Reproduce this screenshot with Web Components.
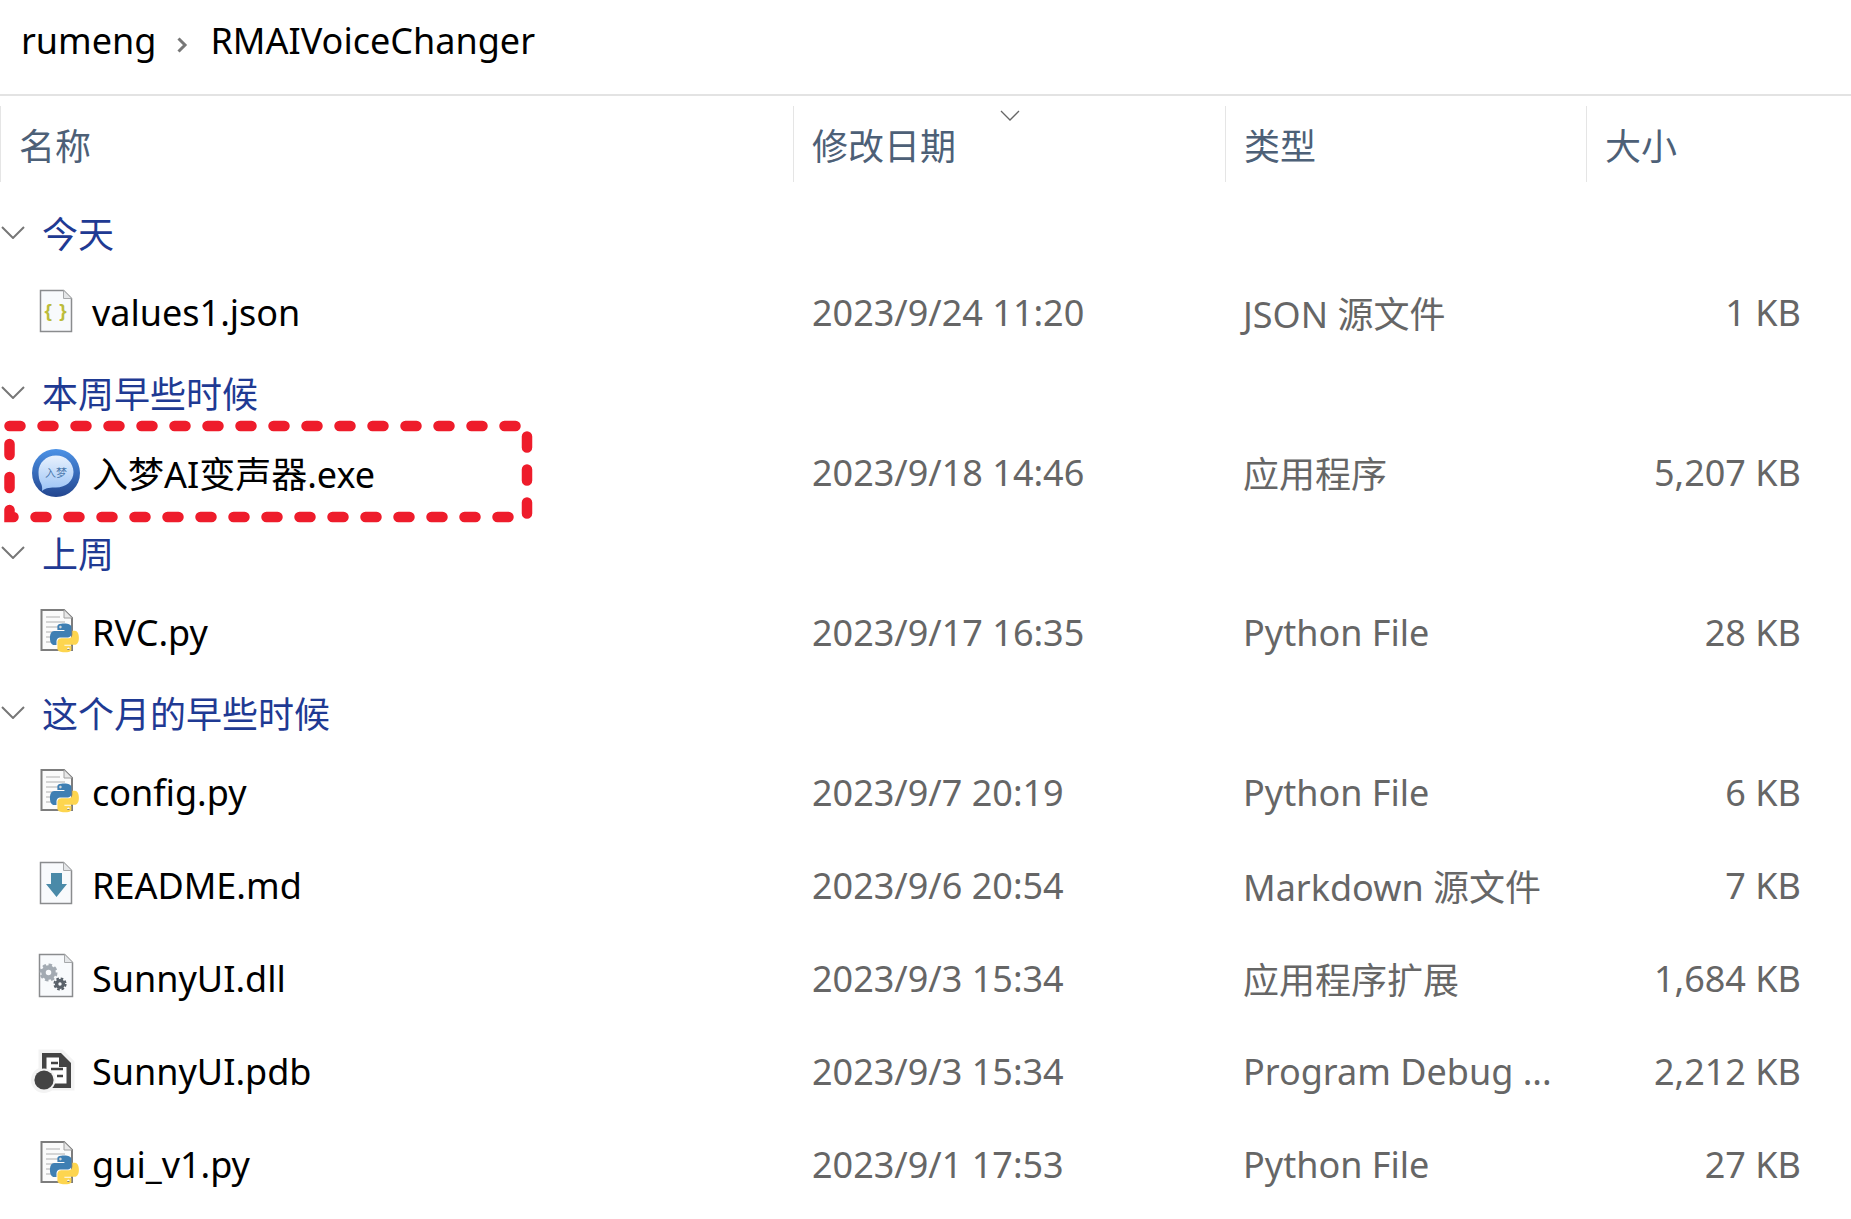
<!DOCTYPE html>
<html lang="zh">
<head>
<meta charset="utf-8">
<title>RMAIVoiceChanger</title>
<style>
  html, body { margin: 0; background: #fff; }
  body {
    font-family: "Noto Sans", "Noto Sans CJK SC", sans-serif;
    font-size: 36px;
    height: 1219px;
    overflow: hidden;
    --cols: 793px 432px 361px 239px;
  }
</style>
</head>
<body>
<explorer-window>
  <bread-crumb>
    <span>rumeng</span>
    <span>RMAIVoiceChanger</span>
  </bread-crumb>
  <column-header></column-header>

  <file-group label="今天">
    <file-row icon="json">values1.json<span slot="date">2023/9/24 11:20</span><span slot="type">JSON 源文件</span><span slot="size">1 KB</span></file-row>
  </file-group>
  <file-group label="本周早些时候">
    <file-row icon="exe">入梦AI变声器.exe<span slot="date">2023/9/18 14:46</span><span slot="type">应用程序</span><span slot="size">5,207 KB</span><dash-mark></dash-mark></file-row>
  </file-group>
  <file-group label="上周">
    <file-row icon="py">RVC.py<span slot="date">2023/9/17 16:35</span><span slot="type">Python File</span><span slot="size">28 KB</span></file-row>
  </file-group>
  <file-group label="这个月的早些时候">
    <file-row icon="py">config.py<span slot="date">2023/9/7 20:19</span><span slot="type">Python File</span><span slot="size">6 KB</span></file-row>
    <file-row icon="md">README.md<span slot="date">2023/9/6 20:54</span><span slot="type">Markdown 源文件</span><span slot="size">7 KB</span></file-row>
    <file-row icon="dll">SunnyUI.dll<span slot="date">2023/9/3 15:34</span><span slot="type">应用程序扩展</span><span slot="size">1,684 KB</span></file-row>
    <file-row icon="pdb">SunnyUI.pdb<span slot="date">2023/9/3 15:34</span><span slot="type">Program Debug ...</span><span slot="size">2,212 KB</span></file-row>
    <file-row icon="py">gui_v1.py<span slot="date">2023/9/1 17:53</span><span slot="type">Python File</span><span slot="size">27 KB</span></file-row>
  </file-group>
</explorer-window>

<script>
// python logo, split in two so each snake gets its own colour
const PY_BLUE = 'M14.25.18l.9.2.73.26.59.3.45.32.34.34.25.34.16.33.1.3.04.26.02.2-.01.13V8.5l-.05.63-.13.55-.21.46-.26.38-.3.31-.33.25-.35.19-.35.14-.33.1-.3.07-.26.04-.21.02H8.77l-.69.05-.59.14-.5.22-.41.27-.33.32-.27.35-.2.36-.15.37-.1.35-.07.32-.04.27-.02.21v3.06H3.17l-.21-.03-.28-.07-.32-.12-.35-.18-.36-.26-.36-.36-.35-.46-.32-.59-.28-.73-.21-.88-.14-1.05-.05-1.23.06-1.22.16-1.04.24-.87.32-.71.36-.57.4-.44.42-.33.42-.24.4-.16.36-.1.32-.05.24-.01h.16l.06.01h8.16v-.83H6.18l-.01-2.75-.02-.37.05-.34.11-.31.17-.28.25-.26.31-.23.38-.2.44-.18.51-.15.58-.12.64-.1.71-.06.77-.04.84-.02 1.27.05zm-6.3 1.98l-.23.33-.08.41.08.41.23.34.33.22.41.09.41-.09.33-.22.23-.34.08-.41-.08-.41-.23-.33-.33-.22-.41-.09-.41.09z';
const PY_YELLOW = 'M21.04 6.11l.28.06.32.12.35.18.36.27.36.35.35.47.32.59.28.73.21.88.14 1.04.05 1.23-.06 1.23-.16 1.04-.24.86-.32.71-.36.57-.4.45-.42.33-.42.24-.4.16-.36.09-.32.05-.24.02-.16-.01h-8.22v.82h5.84l.01 2.76.02.36-.05.34-.11.31-.17.29-.25.25-.31.24-.38.2-.44.17-.51.15-.58.13-.64.09-.71.07-.77.04-.84.01-1.27-.04-1.07-.14-.9-.2-.73-.25-.59-.3-.45-.33-.34-.34-.25-.34-.16-.33-.1-.3-.04-.25-.02-.2.01-.13v-5.34l.05-.64.13-.54.21-.46.26-.38.3-.32.33-.24.35-.2.35-.14.33-.1.3-.06.26-.04.21-.02.13-.01h5.84l.69-.05.59-.14.5-.21.41-.28.33-.32.27-.35.2-.36.15-.36.1-.35.07-.32.04-.28.02-.21V6.07h2.09l.14.01zm-6.47 14.25l-.23.33-.08.41.08.41.23.33.33.23.41.08.41-.08.33-.23.23-.33.08-.41-.08-.41-.23-.33-.33-.23-.41-.08-.41.08z';

const sheet = (x, y, w, h, fold) => `
  <path d="M${x} ${y}H${x + w - fold}L${x + w} ${y + fold}V${y + h}H${x}Z" fill="#f8fafc" stroke="#8a8c8e" stroke-width="1.5"/>
  <path d="M${x + w - fold} ${y}V${y + fold}H${x + w}" fill="#e4e6e8" stroke="#a6a8aa" stroke-width="1"/>`;

const ICONS = {
  json: sheet(8.5, 1.5, 31, 41, 8) + `
    <text x="24" y="28" text-anchor="middle" font-family="Liberation Sans, sans-serif" font-size="19" font-weight="700" fill="#bcbc3a" letter-spacing="1">{ }</text>`,
  py: `
    <path d="M9.5 1H32L40 9V41H9.5Z" fill="#fbfbfb" stroke="#7d7d7d" stroke-width="2"/>
    <path d="M32 1V9H40" fill="#e8e8e8" stroke="#a0a0a0" stroke-width="1"/>
    <path d="M14 8H28M14 13H33M14 18H33M14 23H21M14 28H19M14 33H20" stroke="#c9c9c9" stroke-width="1.6"/>
    <g transform="translate(18 14.5) scale(1.2)"><path d="${PY_BLUE}" fill="#3f7fb3"/><path d="${PY_YELLOW}" fill="#fdd54f"/></g>`,
  md: sheet(8.5, 0.5, 31, 41, 8) + `
    <path d="M19 11H30V22H35L24.5 35 14 22H19Z" fill="#4a8aa8"/>`,
  dll: sheet(7.5, -0.5, 33, 42, 8) + `
    <circle cx="16.5" cy="17.5" r="5" fill="none" stroke="#a3aab2" stroke-width="4.5"/>
    <circle cx="16.5" cy="17.5" r="7.8" fill="none" stroke="#a3aab2" stroke-width="2.4" stroke-dasharray="3.5 2.6"/>
    <circle cx="28" cy="29" r="3.4" fill="none" stroke="#59616a" stroke-width="3.4"/>
    <circle cx="28" cy="29" r="5.6" fill="none" stroke="#59616a" stroke-width="2" stroke-dasharray="2.6 1.8"/>`,
  pdb: `
    <circle cx="12" cy="32" r="13" fill="#f3f3f3"/>
    <path d="M8 3H30L41 14V41H8Z" fill="#f3f3f3" stroke="#f3f3f3" stroke-width="3"/>
    <path d="M10 5H29L39 15V40H10Z" fill="#444"/>
    <path d="M14.5 9.5H27V19H34.5V35.5H14.5Z" fill="#fff"/>
    <path d="M19 15H26M19 21H31M25 28H31" stroke="#444" stroke-width="2.6"/>
    <circle cx="12" cy="32" r="11.5" fill="#f3f3f3"/>
    <circle cx="12" cy="32" r="9.6" fill="#444"/>`,
  exe: `
    <defs>
      <linearGradient id="ring" x1="0" y1="0" x2="0" y2="1"><stop offset="0" stop-color="#4c92e6"/><stop offset="1" stop-color="#23468f"/></linearGradient>
      <linearGradient id="fill" x1="0" y1="0" x2="0" y2="1"><stop offset="0" stop-color="#e8f1fd"/><stop offset="1" stop-color="#9cc4f6"/></linearGradient>
    </defs>
    <circle cx="24" cy="24" r="24" fill="url(#ring)"/>
    <path d="M24 6.5C34 6.5 41.5 14 41.5 23S34 38.5 24 38.5C19 38.5 14 38.5 10 42C10.5 39 10 36.5 9 34.5 7 31.500 6.500 27 6.500 23 6.500 14 14 6.500 24 6.500Z" fill="url(#fill)"/>
    <text x="24" y="27.500" text-anchor="middle" font-family="Noto Sans CJK SC, sans-serif" font-size="11" fill="#4a78ad">入梦</text>`
};

class ExplorerWindow extends HTMLElement {
  constructor() {
    super();
    this.attachShadow({ mode: 'open' });
    this.shadowRoot.innerHTML = `
      <style>
        :host { display: block; width: 1851px; }
      </style>
      <slot></slot>
    `;
  }
}

class BreadCrumb extends HTMLElement {
  constructor() {
    super();
    this.attachShadow({ mode: 'open' });
    const parts = [...this.querySelectorAll('span')];
    this.shadowRoot.innerHTML = `
      <style>
        :host {
          display: flex;
          align-items: center;
          height: 94px;
          padding: 0 0 0 21px;
          border-bottom: 2px solid #e3e3e3;
          box-sizing: content-box;
          color: #000;
          font-size: var(--crumb-size, 36px);
        }
        svg { width: 12px; height: 18px; margin: 0 22px 4px 20px; flex: none; }
        .t { line-height: 1; margin-top: -12px; }
      </style>
      <span class="t">rumeng</span>
      <svg viewBox="0 0 12 18"><path d="M2.500 2.500L9 9l-6.500 6.500" fill="none" stroke="#777" stroke-width="3"/></svg>
      <span class="t">RMAIVoiceChanger</span>
    `;
  }
}

class ColumnHeader extends HTMLElement {
  constructor() {
    super();
    this.attachShadow({ mode: 'open' });
    this.shadowRoot.innerHTML = `
      <style>
        :host {
          display: grid;
          grid-template-columns: var(--cols);
          height: 76px;
          margin: 10px 0 17px;
          color: #4d6077;
          position: relative;
        }
        div {
          display: flex;
          align-items: center;
          padding-left: 18px;
          border-left: 1px solid #e5e5e5;
        }
        div:first-child { border-left: 0; padding-left: 67px; }
        div:last-child { border-right: 1px solid #e5e5e5; }
        svg { position: absolute; left: 1000px; top: 4px; width: 20px; height: 11px; }
      </style>
      <div>名称</div><div>修改日期</div><div>类型</div><div>大小</div>
      <svg viewBox="0 0 20 11"><path d="M1 1l9 9 9-9" fill="none" stroke="#666" stroke-width="1.300"/></svg>
    `;
  }
}

class FileGroup extends HTMLElement {
  constructor() {
    super();
    this.attachShadow({ mode: 'open' });
    this.shadowRoot.innerHTML = `
      <style>
        :host { display: block; }
        .head {
          display: flex;
          align-items: center;
          height: 67px;
          color: #1f3a93;
        }
        svg { width: 24px; height: 13px; margin: 0 17px 0 1px; flex: none; }
      </style>
      <div class="head">
        <svg viewBox="0 0 24 13"><path d="M1 1l11 11L23 1" fill="none" stroke="#777" stroke-width="2"/></svg>
        <span>${this.getAttribute('label')}</span>
      </div>
      <slot></slot>
    `;
  }
}

class FileRow extends HTMLElement {
  constructor() {
    super();
    this.attachShadow({ mode: 'open' });
    this.shadowRoot.innerHTML = `
      <style>
        :host {
          display: grid;
          grid-template-columns: var(--cols);
          height: 93px;
          align-items: center;
          color: #666;
          position: relative;
        }
        .name { display: flex; align-items: center; color: #000; padding-left: 32px; gap: 12px; }
        svg { width: 48px; height: 48px; flex: none; overflow: visible; }
        .date { padding-left: 19px; }
        .type { padding-left: 18px; white-space: nowrap; }
        .size { text-align: right; padding-right: 24px; }
      </style>
      <div class="name"><svg viewBox="0 0 48 48">${ICONS[this.getAttribute('icon')]}</svg><span><slot></slot></span></div>
      <div class="date"><slot name="date"></slot></div>
      <div class="type"><slot name="type"></slot></div>
      <div class="size"><slot name="size"></slot></div>
    `;
  }
}

// red hand-drawn marker around the exe row, sits over the content
class DashMark extends HTMLElement {
  constructor() {
    super();
    this.attachShadow({ mode: 'open' });
    this.shadowRoot.innerHTML = `
      <style>
        :host { position: absolute; left: 0; top: 0; width: 540px; height: 93px; pointer-events: none; }
        svg { width: 540px; height: 110px; overflow: visible; display: block; }
      </style>
      <svg viewBox="0 0 540 110"><path d="M9.500 0H527V91H9.500V0" fill="none" stroke="#ee1c2b" stroke-width="10.500" stroke-linecap="round" stroke-dasharray="11 22"/></svg>
    `;
  }
}

customElements.define('explorer-window', ExplorerWindow);
customElements.define('bread-crumb', BreadCrumb);
customElements.define('column-header', ColumnHeader);
customElements.define('file-group', FileGroup);
customElements.define('file-row', FileRow);
customElements.define('dash-mark', DashMark);
</script>
</body>
</html>
